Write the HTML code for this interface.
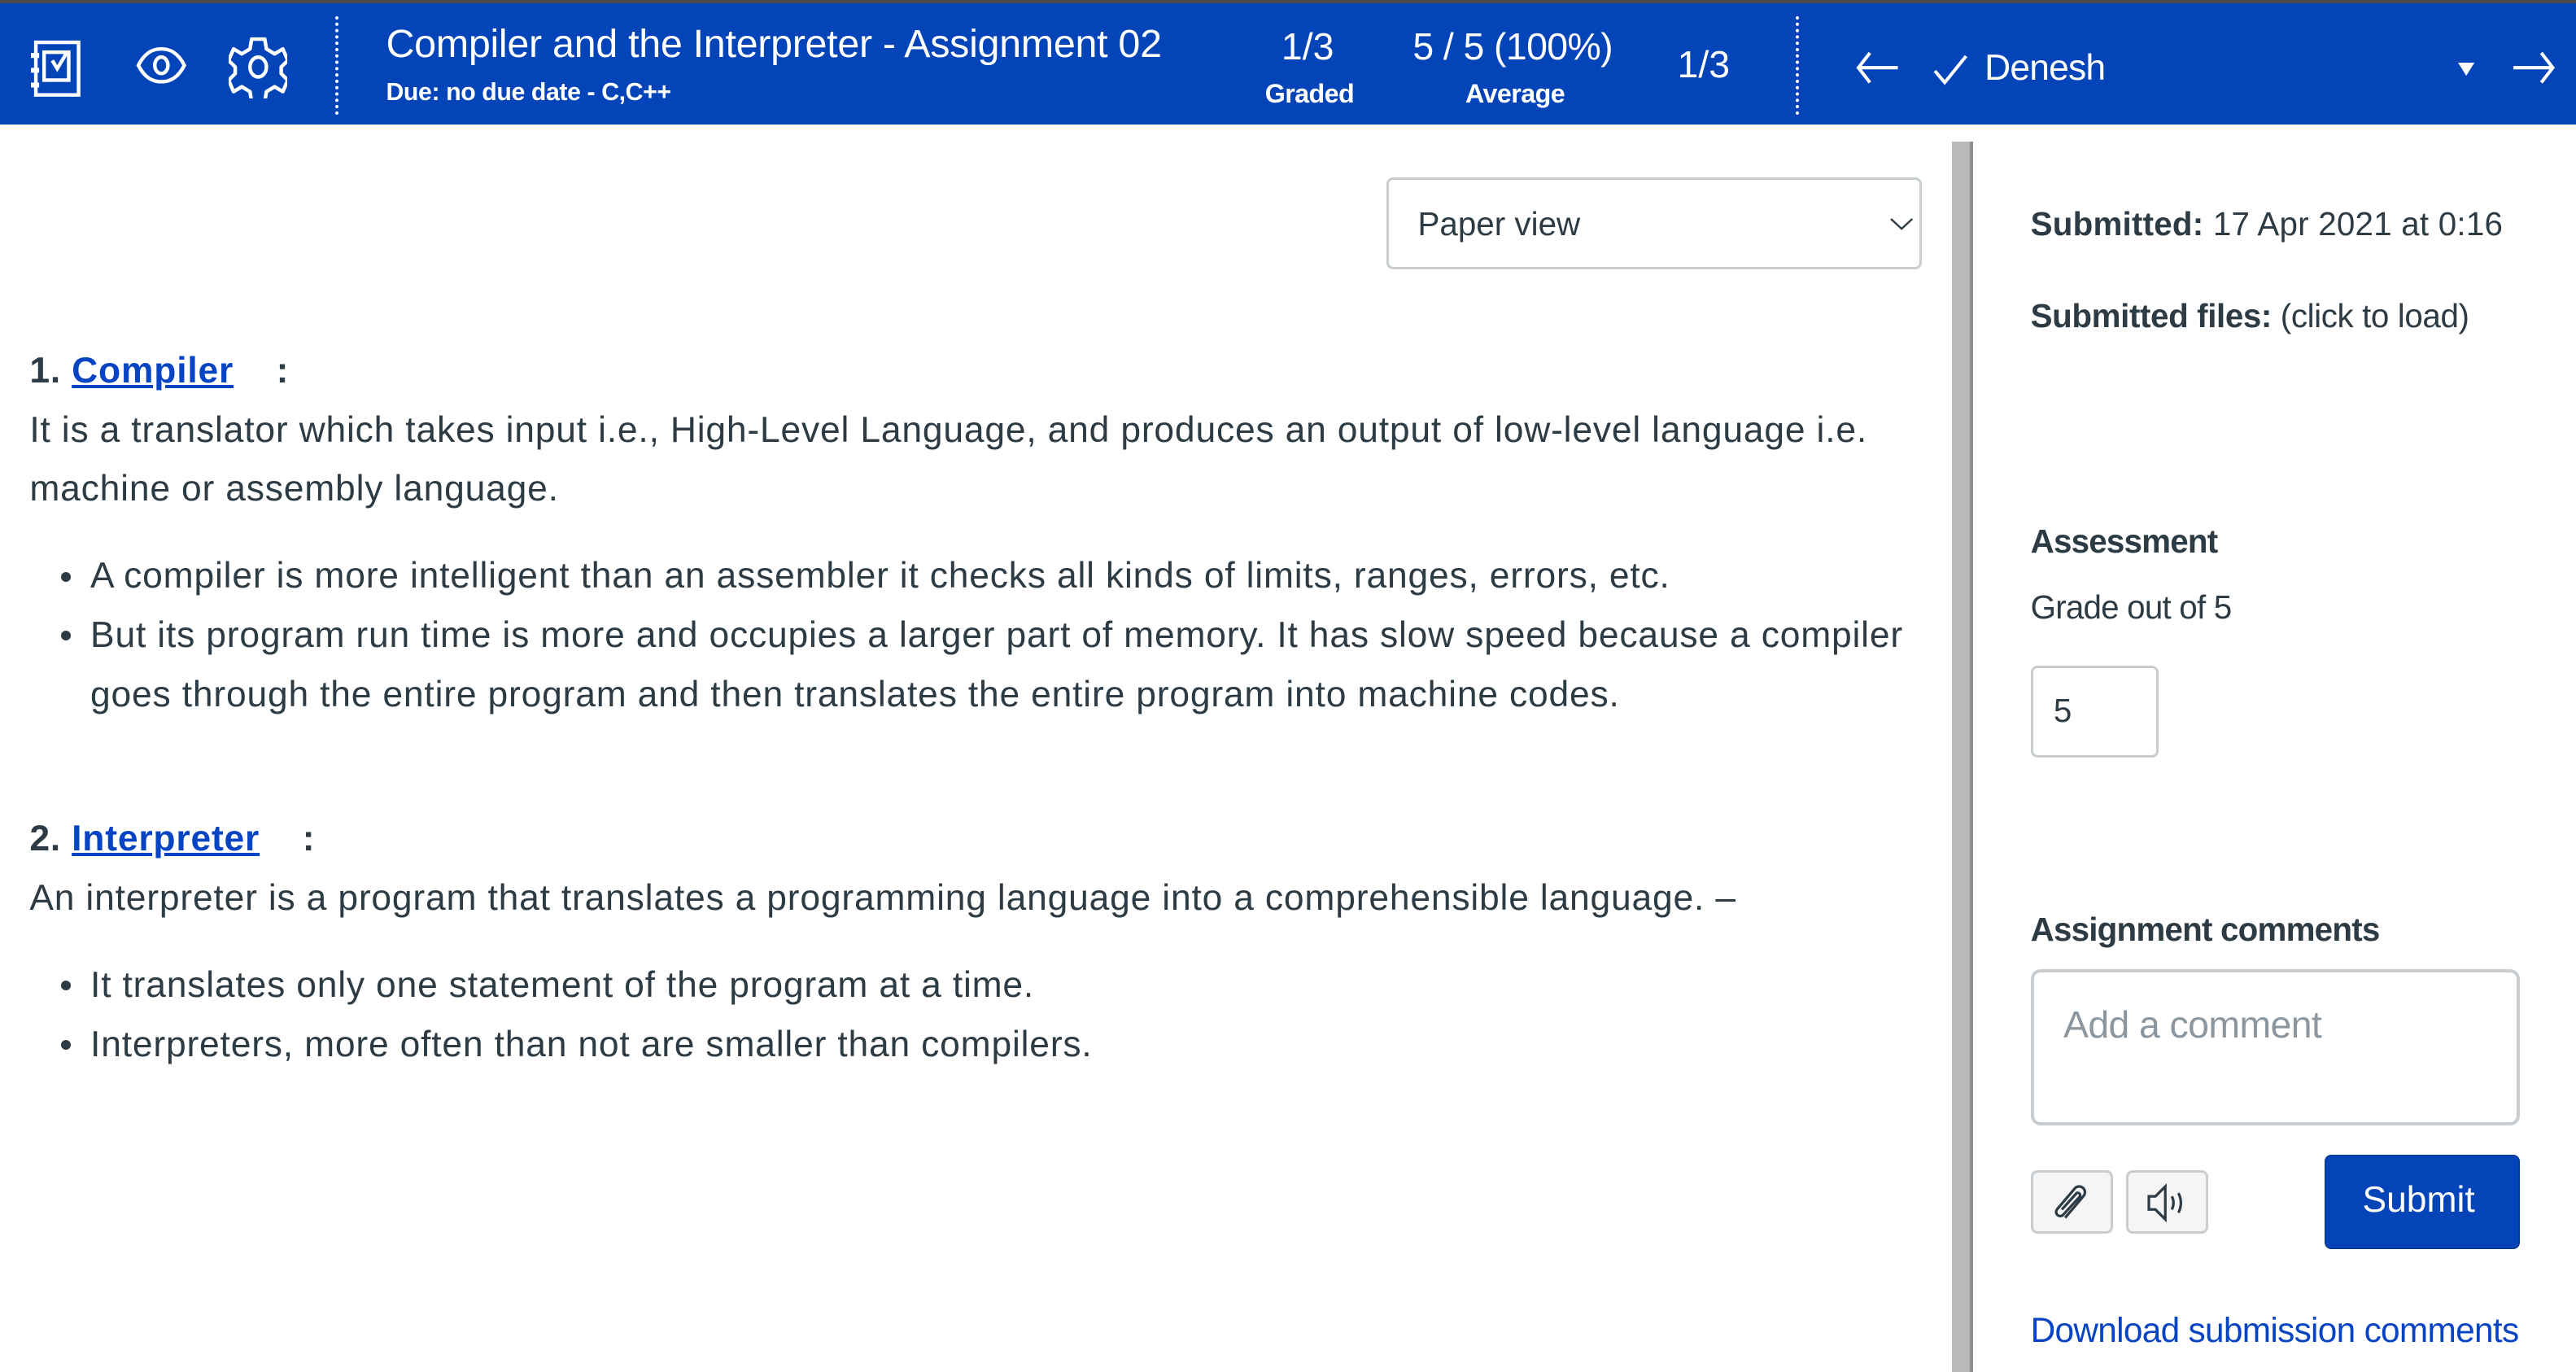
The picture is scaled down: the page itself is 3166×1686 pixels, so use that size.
<!DOCTYPE html>
<html><head><meta charset="utf-8"><style>
html{zoom:2.0191}
body{margin:0;width:1568px;height:835px;overflow:hidden;background:#fff;font-family:"Liberation Sans",sans-serif;color:#2d3b45;position:relative}
.hdr{position:absolute;left:0;top:0;width:1568px;height:76px;background:#0344b8;border-top:2px solid #4a4a4a;box-sizing:border-box;color:#fff}
.a{position:absolute;white-space:nowrap}
.sep{position:absolute;top:8px;height:60px;border-left:2px dotted #fff}
.bar{position:absolute;left:1188px;top:86px;width:11px;height:749px;background:#b9b9b9;border-right:2px solid #8e8e8e}
.txt{font-size:22px;letter-spacing:0.4px;line-height:36px}
a{color:#0644c4;text-decoration:underline}
ul{margin:0;padding:0;list-style:none}
li{position:relative;padding-left:37px}
li:before{content:"";position:absolute;left:19px;top:15px;width:6px;height:6px;border-radius:50%;background:#2d3b45}
.b{font-weight:bold}
</style></head><body>
<div class="hdr">
<svg class="a" style="left:18px;top:22px" width="34" height="36" viewBox="0 0 34 36" fill="none" stroke="#fff" stroke-width="2.2"><rect x="4" y="2" width="26" height="32"/><rect x="9" y="8" width="15" height="17"/><path d="M14 13l3 5 6-10"/><path d="M1 10h5M1 19h5M1 28h5" stroke-width="3"/></svg>
<svg class="a" style="left:82px;top:26px" width="32" height="24" viewBox="0 0 32 24" fill="none" stroke="#fff" stroke-width="2.2"><path d="M2 12C6 4 11 2 16 2s10 2 14 10c-4 8-9 10-14 10S6 20 2 12z"/><ellipse cx="16" cy="12" rx="4" ry="5"/></svg>
<svg class="a" style="left:139px;top:20px" width="36" height="38" viewBox="0 0 36 38" fill="none" stroke="#fff" stroke-width="2.2" stroke-linejoin="round"><path d="M14 2h8l1 6 5 3 5-3 3 7-4 4v4l4 4-3 7-5-3-5 3-1 6h-8l-1-6-5-3-5 3-3-7 4-4v-4l-4-4 3-7 5 3 5-3z"/><ellipse cx="18" cy="19" rx="5" ry="6"/></svg>
<div class="sep" style="left:204px"></div>
<div class="a" style="left:235px;top:11px;font-size:24px;letter-spacing:-0.15px">Compiler and the Interpreter - Assignment 02</div>
<div class="a" style="left:235px;top:46px;font-size:15px;font-weight:bold;letter-spacing:-0.2px">Due: no due date - C,C++</div>
<div class="a" style="left:780px;top:13px;font-size:23px">1/3</div>
<div class="a" style="left:770px;top:46px;font-size:16px;font-weight:bold;letter-spacing:-0.3px">Graded</div>
<div class="a" style="left:860px;top:13px;font-size:23px;letter-spacing:-0.3px">5 / 5 (100%)</div>
<div class="a" style="left:892px;top:46px;font-size:16px;font-weight:bold;letter-spacing:-0.3px">Average</div>
<div class="a" style="left:1021px;top:24px;font-size:23px">1/3</div>
<div class="sep" style="left:1093px"></div>
<svg class="a" style="left:1128px;top:28px" width="28" height="22" viewBox="0 0 28 22" fill="none" stroke="#fff" stroke-width="2"><path d="M27 11H3M10 2L3 11l7 9"/></svg>
<svg class="a" style="left:1176px;top:30px" width="24" height="20" viewBox="0 0 24 20" fill="none" stroke="#fff" stroke-width="2"><path d="M2 11l6 7L21 2"/></svg>
<div class="a" style="left:1208px;top:27px;font-size:22px;letter-spacing:-0.4px">Denesh</div>
<svg class="a" style="left:1495px;top:35px" width="12" height="10" viewBox="0 0 12 10"><path d="M1 1h10L6 9z" fill="#fff"/></svg>
<svg class="a" style="left:1529px;top:28px" width="28" height="22" viewBox="0 0 28 22" fill="none" stroke="#fff" stroke-width="2"><path d="M1 11h24M18 2l7 9-7 9"/></svg>
</div>

<div class="a" style="left:844px;top:108px;width:326px;height:56px;border:1.5px solid #c7cdd1;border-radius:4px;box-sizing:border-box"></div>
<div class="a" style="left:863px;top:125px;font-size:20px;letter-spacing:0px">Paper view</div>
<svg class="a" style="left:1150px;top:131px" width="15" height="10" viewBox="0 0 15 10" fill="none" stroke="#2d3b45" stroke-width="1.2"><path d="M1 2l6.5 6L14 2"/></svg>

<div class="a txt" style="left:18px;top:208px;width:1165px;white-space:normal">
<div><span class="b">1.</span> <a class="b" href="#x">Compiler</a> &nbsp;&nbsp; <span class="b">:</span></div>
<div>It is a translator which takes input i.e., High-Level Language, and produces an output of low-level language i.e.</div>
<div>machine or assembly language.</div>
<ul style="margin-top:17px">
<li>A compiler is more intelligent than an assembler it checks all kinds of limits, ranges, errors, etc.</li>
<li>But its program run time is more and occupies a larger part of memory. It has slow speed because a compiler<br>goes through the entire program and then translates the entire program into machine codes.</li>
</ul>
</div>
<div class="a txt" style="left:18px;top:493px;width:1165px;white-space:normal">
<div><span class="b">2.</span> <a class="b" href="#x">Interpreter</a> &nbsp;&nbsp; <span class="b">:</span></div>
<div>An interpreter is a program that translates a programming language into a comprehensible language. –</div>
<ul style="margin-top:17px">
<li>It translates only one statement of the program at a time.</li>
<li>Interpreters, more often than not are smaller than compilers.</li>
</ul>
</div>

<div class="bar"></div>

<div class="a" style="left:1236px;top:125px;font-size:20px;letter-spacing:0.1px"><b>Submitted:</b> 17 Apr 2021 at 0:16</div>
<div class="a" style="left:1236px;top:181px;font-size:20px;letter-spacing:-0.2px"><b>Submitted files:</b> (click to load)</div>
<div class="a" style="left:1236px;top:318px;font-size:20px;font-weight:bold;letter-spacing:-0.4px">Assessment</div>
<div class="a" style="left:1236px;top:358px;font-size:20px;letter-spacing:-0.4px">Grade out of 5</div>
<div class="a" style="left:1236px;top:405px;width:78px;height:56px;border:1.5px solid #c7cdd1;border-radius:4px;box-sizing:border-box"></div>
<div class="a" style="left:1250px;top:421px;font-size:20px">5</div>
<div class="a" style="left:1236px;top:554px;font-size:20px;font-weight:bold;letter-spacing:-0.4px">Assignment comments</div>
<div class="a" style="left:1236px;top:590px;width:298px;height:95px;border:2px solid #c7cdd1;border-radius:6px;box-sizing:border-box"></div>
<div class="a" style="left:1256px;top:610px;font-size:23px;color:#8b969e;letter-spacing:-0.3px">Add a comment</div>
<div class="a" style="left:1236px;top:712px;width:50px;height:39px;background:#f5f5f5;border:1.5px solid #c7cdd1;border-radius:4px;box-sizing:border-box"></div>
<svg class="a" style="left:1248px;top:719px" width="26" height="26" viewBox="0 0 26 26" fill="none" stroke="#2d3b45" stroke-width="1.6"><path d="M9 22L20 9a3.5 3.5 0 0 0-5-5L4 17a2.5 2.5 0 0 0 4 3l10-11a1.5 1.5 0 0 0-2-2L7 17"/></svg>
<div class="a" style="left:1294px;top:712px;width:50px;height:39px;background:#f5f5f5;border:1.5px solid #c7cdd1;border-radius:4px;box-sizing:border-box"></div>
<svg class="a" style="left:1306px;top:720px" width="28" height="24" viewBox="0 0 28 24" fill="none" stroke="#2d3b45" stroke-width="1.6"><path d="M2 8h4l6-6v20l-6-6H2z"/><path d="M16 8q2 4 0 8M20 6q3 6 0 12"/></svg>
<div class="a" style="left:1415px;top:703px;width:119px;height:57px;background:#0344b8;border-radius:4px;border:1px solid #033a9c;box-sizing:border-box"></div>
<div class="a" style="left:1438px;top:718px;font-size:22px;color:#fff;letter-spacing:0px">Submit</div>
<div class="a" style="left:1236px;top:798px;font-size:21px;color:#0644c4;letter-spacing:-0.35px">Download submission comments</div>
</body></html>
